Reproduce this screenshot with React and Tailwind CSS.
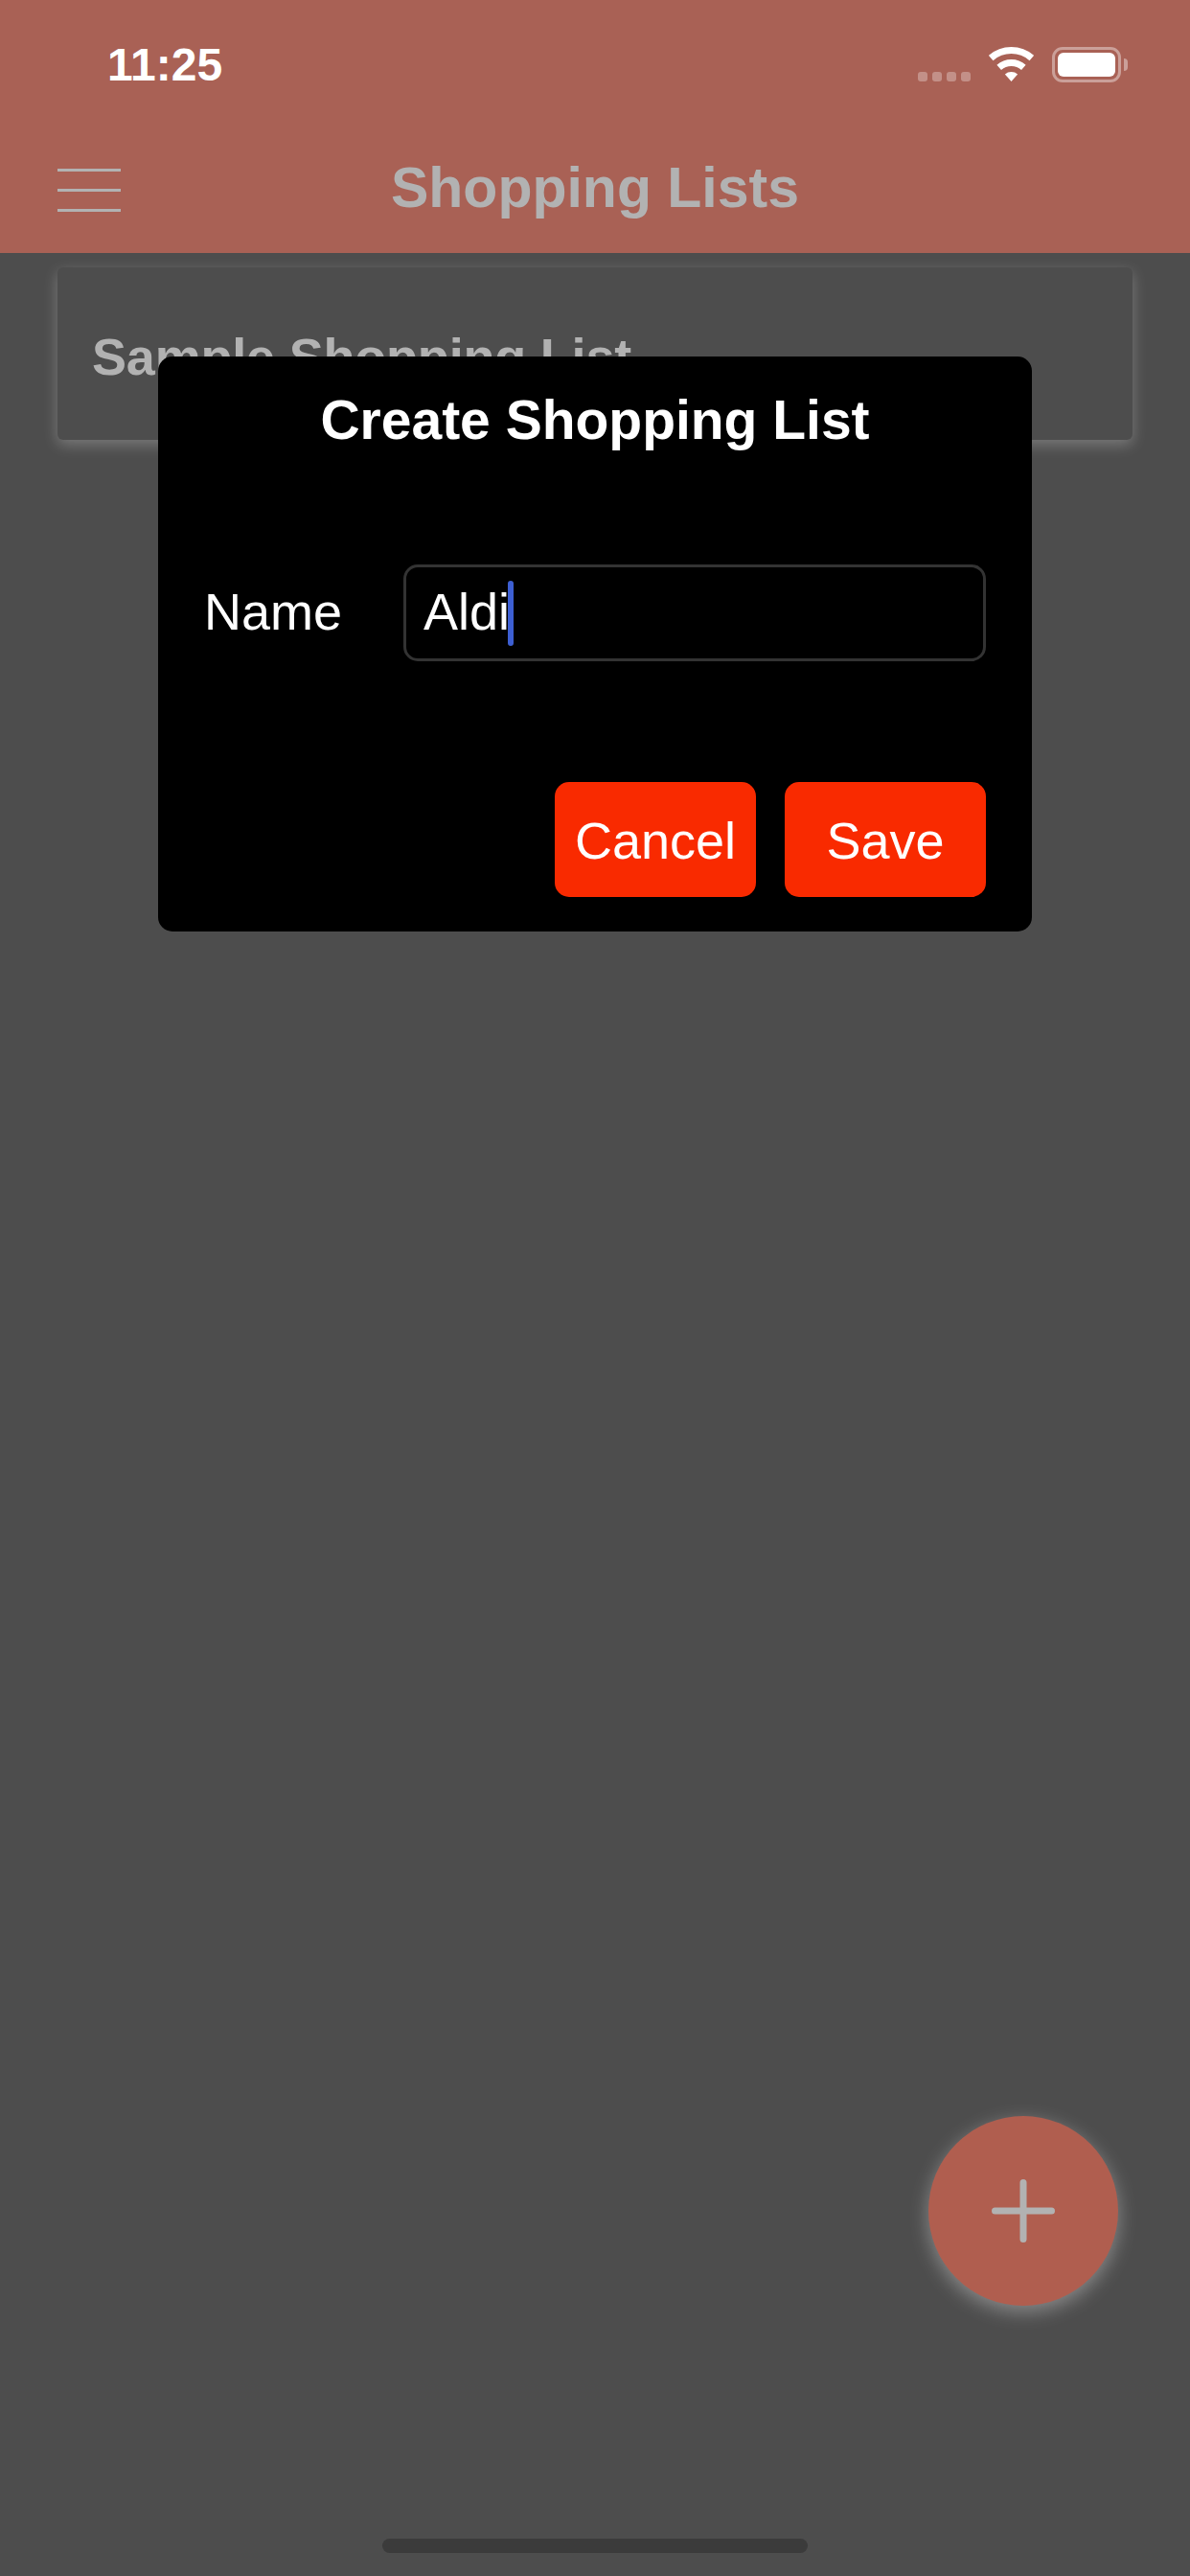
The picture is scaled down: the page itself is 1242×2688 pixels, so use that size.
import React from 'react';

const StatusBar = () => (
  <div className="flex h-[136px] items-start justify-between pl-[112px] pr-[65px] pt-[49px]">
    <span className="text-[48px] font-semibold leading-[38px] text-white">11:25</span>
    <div className="flex items-start">
      <div className="mr-[19px] mt-[26px] flex gap-[5px]">
        <span className="h-[10px] w-[10px] rounded-[3px] bg-white/30" />
        <span className="h-[10px] w-[10px] rounded-[3px] bg-white/30" />
        <span className="h-[10px] w-[10px] rounded-[3px] bg-white/30" />
        <span className="h-[10px] w-[10px] rounded-[3px] bg-white/30" />
      </div>
      <svg width="47" height="36" viewBox="0 0 47 36" fill="none" className="mr-[19px]">
        <path d="M2.2 11.5A32.5 32.5 0 0 1 44.8 11.5" stroke="#fff" strokeWidth="7" />
        <path d="M10.7 21.3A19.5 19.5 0 0 1 36.3 21.3" stroke="#fff" strokeWidth="7" />
        <path d="M23.5 36L16.9 28.4A10 10 0 0 1 30.1 28.4Z" fill="#fff" />
      </svg>
      <div className="flex items-center">
        <div className="h-[37px] w-[72px] rounded-[11px] border-[3px] border-white/40 p-[3px]">
          <div className="h-full w-full rounded-[6px] bg-white" />
        </div>
        <span className="ml-[3px] h-[13px] w-[4px] rounded-r-full bg-white/40" />
      </div>
    </div>
  </div>
);

const App = () => {
  return (
    <div className="relative h-[2688px] w-[1242px] overflow-hidden bg-[#4d4d4d] font-['Liberation_Sans',Arial,sans-serif]">
      <header className="h-[264px] bg-[#a96155]">
        <StatusBar />
        <div className="relative flex h-[128px] items-center justify-center">
          <div className="absolute left-[60px] top-[40px] flex w-[66px] flex-col gap-[18px]">
            <span className="h-[3px] bg-[#b2b2b2]" />
            <span className="h-[3px] bg-[#b2b2b2]" />
            <span className="h-[3px] bg-[#b2b2b2]" />
          </div>
          <h1 className="-mt-[8px] text-[59px] font-bold leading-none text-[#b2b2b2]">Shopping Lists</h1>
        </div>
      </header>

      <main className="px-[60px] pt-[15px]">
        <div className="flex h-[180px] items-center rounded-[6px] bg-[#4d4d4d] px-[36px] shadow-[0_5px_15px_rgba(255,255,255,0.26)]">
          <span className="mt-[6px] text-[54px] font-bold leading-none tracking-[-0.2px] text-[#b2b2b2]">Sample Shopping List</span>
        </div>
      </main>

      <div className="absolute left-[165px] top-[372px] flex h-[600px] w-[912px] flex-col rounded-[15px] bg-black pt-[33px] text-white">
        <h2 className="text-center text-[57px] font-bold leading-[66px]">Create Shopping List</h2>
        <div className="mt-[118px] flex items-center pl-[48px] pr-[48px]">
          <label className="-mt-[4px] text-[54px] leading-none">Name</label>
          <div className="ml-auto flex h-[101px] w-[608px] items-center rounded-[15px] border-[3px] border-[#333333] pl-[18px]">
            <span className="-mt-[4px] text-[54px] leading-none">Aldi</span>
            <span className="-ml-[2px] h-[68px] w-[6px] rounded-full bg-[#3d5fd2]" />
          </div>
        </div>
        <div className="mt-[126px] flex justify-end gap-[30px] pr-[48px]">
          <button className="h-[120px] w-[210px] rounded-[15px] bg-[#f92a00] pt-[3px] text-[54px]">Cancel</button>
          <button className="h-[120px] w-[210px] rounded-[15px] bg-[#f92a00] pt-[3px] text-[54px]">Save</button>
        </div>
      </div>

      <button className="absolute left-[969px] top-[2208px] flex h-[198px] w-[198px] items-center justify-center rounded-full bg-[#b05e4f] shadow-[0_6px_20px_rgba(255,255,255,0.35)]">
        <svg width="66" height="66" viewBox="0 0 66 66" fill="none" stroke="#b2b2b2" strokeWidth="7" strokeLinecap="round">
          <path d="M33 3.5V62.5M3.5 33H62.5" />
        </svg>
      </button>

      <div className="absolute left-[399px] top-[2649px] h-[15px] w-[444px] rounded-full bg-[#3b3b3b]" />
    </div>
  );
};

export default App;
